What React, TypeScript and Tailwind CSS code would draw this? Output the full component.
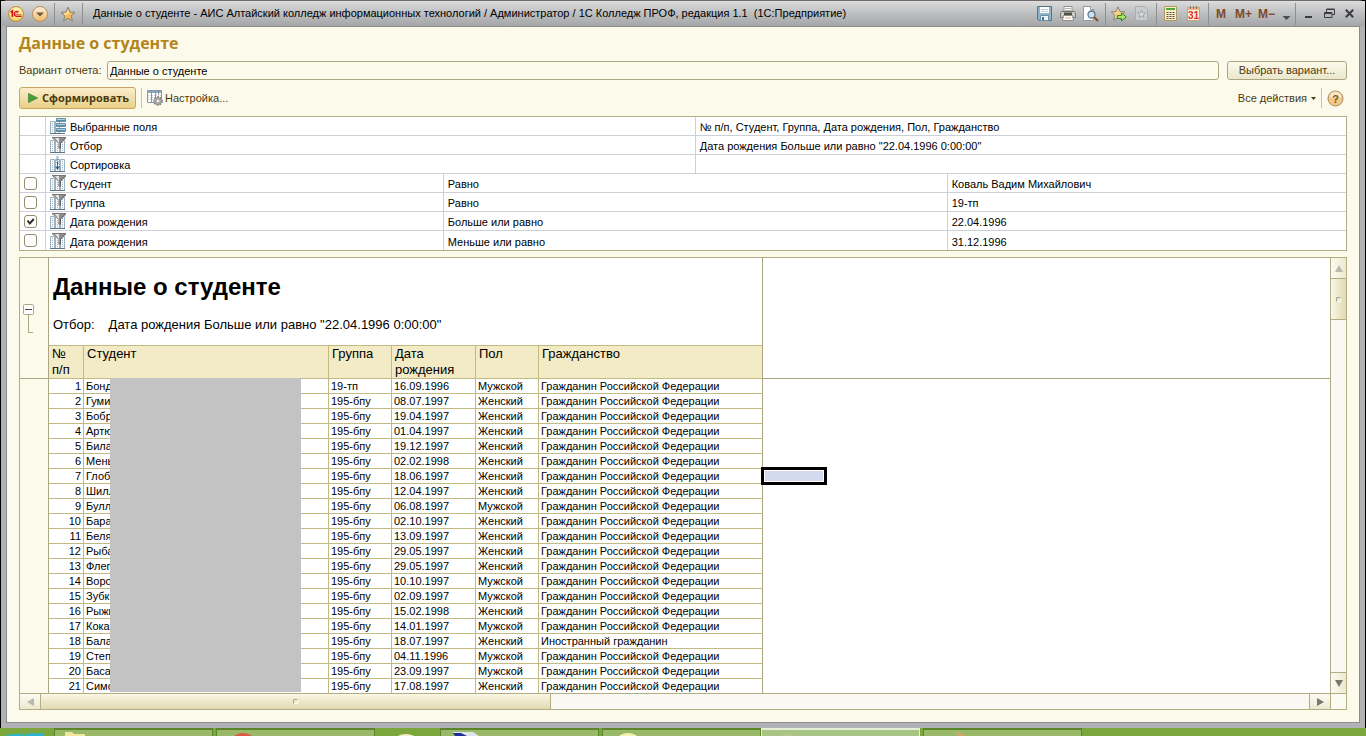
import { useState } from 'react'
import type { ReactNode } from 'react'
import clsx from 'clsx'

type Student = [name: string, group: string, birth: string, sex: string, citizenship: string]

const RF = 'Гражданин Российской Федерации'

const students: Student[] = [
    ['Бонд', '19-тп', '16.09.1996', 'Мужской', RF],
    ['Гуми', '195-бпу', '08.07.1997', 'Женский', RF],
    ['Бобр', '195-бпу', '19.04.1997', 'Женский', RF],
    ['Артю', '195-бпу', '01.04.1997', 'Женский', RF],
    ['Била', '195-бпу', '19.12.1997', 'Женский', RF],
    ['Мень', '195-бпу', '02.02.1998', 'Женский', RF],
    ['Глоб', '195-бпу', '18.06.1997', 'Женский', RF],
    ['Шилл', '195-бпу', '12.04.1997', 'Женский', RF],
    ['Булл', '195-бпу', '06.08.1997', 'Мужской', RF],
    ['Бара', '195-бпу', '02.10.1997', 'Женский', RF],
    ['Беля', '195-бпу', '13.09.1997', 'Женский', RF],
    ['Рыба', '195-бпу', '29.05.1997', 'Женский', RF],
    ['Флег', '195-бпу', '29.05.1997', 'Женский', RF],
    ['Воро', '195-бпу', '10.10.1997', 'Мужской', RF],
    ['Зубк', '195-бпу', '02.09.1997', 'Мужской', RF],
    ['Рыжк', '195-бпу', '15.02.1998', 'Женский', RF],
    ['Кока', '195-бпу', '14.01.1997', 'Мужской', RF],
    ['Бала', '195-бпу', '18.07.1997', 'Женский', 'Иностранный гражданин'],
    ['Степ', '195-бпу', '04.11.1996', 'Мужской', RF],
    ['Баса', '195-бпу', '23.09.1997', 'Мужской', RF],
    ['Симо', '195-бпу', '17.08.1997', 'Женский', RF],
]

const initialFilters = [
    { field: 'Студент', op: 'Равно', value: 'Коваль Вадим Михайлович', on: false },
    { field: 'Группа', op: 'Равно', value: '19-тп', on: false },
    { field: 'Дата рождения', op: 'Больше или равно', value: '22.04.1996', on: true },
    { field: 'Дата рождения', op: 'Меньше или равно', value: '31.12.1996', on: false },
]

/* ---------- icons ---------- */

function LogoIcon() {
    return (
        <svg width="16" height="16" viewBox="0 0 16 16">
            <defs>
                <radialGradient id="logo" cx="50%" cy="35%" r="65%">
                    <stop offset="0" stopColor="#fffbd0" />
                    <stop offset="0.7" stopColor="#fbe27a" />
                    <stop offset="1" stopColor="#e9b94a" />
                </radialGradient>
            </defs>
            <circle cx="8" cy="8" r="7.5" fill="url(#logo)" stroke="#b98d4a" />
            <path d="M2.6 6.3 4.4 5v6" fill="none" stroke="#d4141a" strokeWidth="1.7" />
            <path d="M10.6 6.2A2.5 2.5 0 1 0 8.6 10.4H13.6" fill="none" stroke="#d4141a" strokeWidth="1.3" />
            <path d="M9.6 7.3A1 1 0 1 0 8.7 8.8H13.6" fill="none" stroke="#d4141a" strokeWidth="0.8" />
        </svg>
    )
}

function MenuIcon() {
    return (
        <svg width="16" height="16" viewBox="0 0 16 16">
            <defs>
                <linearGradient id="menu" x1="0" y1="0" x2="0" y2="1">
                    <stop offset="0" stopColor="#fdf1dc" />
                    <stop offset="1" stopColor="#efb96c" />
                </linearGradient>
            </defs>
            <circle cx="8" cy="8" r="7.5" fill="url(#menu)" stroke="#b98d5a" />
            <path d="M4 6.5h8L8 10.5z" fill="#6b5a3e" />
        </svg>
    )
}

function StarIcon() {
    return (
        <svg width="16" height="16" viewBox="0 0 16 16">
            <path d="M8 1.2 10 6l5 .4-3.8 3.3L12.4 15 8 12.1 3.6 15l1.2-5.3L1 6.4 6 6z" fill="#f6bd5a" stroke="#85857c" strokeLinejoin="round" />
            <path d="M8 3.5 9.2 7 5 9.5 4 7.3 6.8 7z" fill="#fde7b4" />
        </svg>
    )
}

function SaveIcon() {
    return (
        <svg width="15" height="15" viewBox="0 0 15 15">
            <path d="M.5.5h14v14H2L.5 13z" fill="#8fb4ca" stroke="#4d7690" />
            <path d="M3 1h9v6H3z" fill="#fff" />
            <path d="M4 3.5h7M4 5.5h7" stroke="#b9cbd6" />
            <path d="M3.5 9.5h8v5h-8z" fill="#eef3f6" stroke="#6d90a6" />
            <path d="M5 11h2v3H5z" fill="#456f8c" />
        </svg>
    )
}

function PrintIcon() {
    return (
        <svg width="16" height="15" viewBox="0 0 16 15">
            <path d="M4 .5h8V6H4z" fill="#fff" stroke="#8d8d8d" />
            <path d="M5 2.5h6M5 4.5h6" stroke="#b5b5b5" />
            <path d="M1.5 5.5h13l1 2v4H.5v-4z" fill="#d2cdc2" stroke="#77746d" />
            <path d="M4 6.5h8v3H4z" fill="#55504a" />
            <path d="M3.5 9.5h9l1 5h-11z" fill="#fff" stroke="#8d8d8d" />
            <path d="M5 12h6" stroke="#e0a070" />
        </svg>
    )
}

function PreviewIcon() {
    return (
        <svg width="16" height="16" viewBox="0 0 16 16">
            <path d="M.5.5h7l3 3v11H.5z" fill="#fff" stroke="#8b9daa" />
            <path d="M7.5.5v3h3" fill="#e6edf2" stroke="#8b9daa" />
            <circle cx="8.5" cy="8.5" r="3.5" fill="#cfe1ec" stroke="#557488" strokeWidth="1.3" />
            <path d="m11 11 4 4" stroke="#8a4a2c" strokeWidth="2.2" />
        </svg>
    )
}

function StarAddIcon() {
    return (
        <svg width="16" height="16" viewBox="0 0 16 16">
            <path d="M7 .8 9 5.5l4.8.4L10.2 9.2l1.1 5L7 11.5 2.7 14.2l1.1-5L.3 5.9 5 5.5z" fill="#f8cf80" stroke="#85857c" strokeLinejoin="round" />
            <path d="M6.5 9.5h4V7l4.8 4-4.8 4v-2.500h-4z" fill="#a9e66c" stroke="#2f8a1e" />
        </svg>
    )
}

function PageStarIcon() {
    return (
        <svg width="13" height="15" viewBox="0 0 13 15">
            <path d="M.5.5h9l3 3v11H.5z" fill="#c9cdd0" stroke="#a9aeb2" />
            <path d="m6.5 4 1.2 2.6 2.8.3-2.1 1.9.6 2.7-2.500-1.4L4 11.5l.6-2.7-2.1-1.9 2.8-.3z" fill="#d5d8da" stroke="#969c9f" strokeWidth=".8" />
        </svg>
    )
}

function CalcIcon() {
    return (
        <svg width="13" height="15" viewBox="0 0 13 15">
            <path d="M.5.5h12v14H.5z" fill="#fbeecb" stroke="#b09a62" />
            <path d="M2 2h9v2H2z" fill="#4ea83e" />
            <path d="M2.5 6.5h8M2.5 8.5h8M2.5 10.5h8M2.5 12.5h8" stroke="#5d4c38" strokeDasharray="2 1" />
        </svg>
    )
}

function CalendarIcon() {
    return (
        <svg width="13" height="15" viewBox="0 0 13 15">
            <path d="M.5 1.5h12v13H.5z" fill="#fbf1dc" stroke="#c4a47c" />
            <path d="M1 2h11v2H1z" fill="#edb789" />
            <path d="M3.5 0v3M6.5 0v3M9.5 0v3" stroke="#8c7a68" />
            <text x="6.5" y="13" textAnchor="middle" fontSize="10" fontFamily="Liberation Sans, sans-serif" fill="#e0301c">31</text>
        </svg>
    )
}

function HelpIcon() {
    return (
        <svg width="17" height="17" viewBox="0 0 17 17">
            <circle cx="8.5" cy="8.5" r="7.5" fill="#f3c888" stroke="#a8895c" />
            <path d="M2.5 7.5a6 6 0 0 1 12 0z" fill="#fbe6c4" />
            <text x="8.5" y="12.5" textAnchor="middle" fontSize="11" fontWeight="bold" fontFamily="Liberation Sans, sans-serif" fill="#7a5526">?</text>
        </svg>
    )
}

function SettingsIcon() {
    return (
        <svg width="16" height="16" viewBox="0 0 16 16">
            <path d="M.5.5h14v12H.5z" fill="#fff" stroke="#8796a4" />
            <path d="M1 1h13v2H1z" fill="#8fa9bd" />
            <path d="M4.5 1v11M8.5 1v11M11.5 1v11" stroke="#8796a4" />
            <path d="M1 5.5h13M1 7.5h13M1 9.5h13" stroke="#c9d2da" strokeDasharray="1 1" />
            <circle cx="11" cy="11" r="4" fill="#a9a9a9" stroke="#858585" strokeWidth="1.6" strokeDasharray="1.7 1.2" />
            <circle cx="11" cy="11" r="1.3" fill="#f4f4f4" />
        </svg>
    )
}

// narrow table columns shared by the settings row icons
function Columns() {
    return (
        <>
            <path d="M.5 3.5h4v12h-4zM5.500 3.5h4v12h-4zM10.5 3.5h4v12h-4z" fill="#f6f9fb" stroke="#9fb1bf" />
            <path d="M2.5 5v10M7.5 5v10M12.5 5v10" stroke="#a9bac7" strokeDasharray="1 1" />
            <path d="M0 15.5h15" stroke="#5c7488" />
        </>
    )
}

function FieldsIcon() {
    return (
        <svg width="16" height="16" viewBox="0 0 16 16">
            <path d="M.5 3.5h4v12h-4zM5.5 3.5h4v12h-4z" fill="#f6f9fb" stroke="#9fb1bf" />
            <path d="M2.5 5v10" stroke="#a9bac7" strokeDasharray="1 1" />
            <path d="M0 15.5h15" stroke="#5c7488" />
            {[0, 5, 10].map((y) => (
                <g key={y}>
                    <rect x="6" y={y} width="10" height="4" rx="1" fill="#5f8ea6" />
                    <path d={`M7 ${y + 1.5}h8`} stroke="#b4d3e1" />
                </g>
            ))}
        </svg>
    )
}

function FilterIcon() {
    return (
        <svg width="16" height="16" viewBox="0 0 16 16">
            <Columns />
            <path d="M2 0h14v1l-5 5v5l-1 1-2-1V6L2 1z" fill="#8f8f8f" />
            <path d="M5 1h4v9H8.500V5.500z" fill="#e4e4e4" />
            <path d="M15.500 1 10.500 6v5.500" fill="none" stroke="#5f5f5f" />
            <path d="M2 .5h14" stroke="#777" />
        </svg>
    )
}

function SortIcon() {
    return (
        <svg width="16" height="16" viewBox="0 0 16 16">
            <Columns />
            <path d="M7 0v8M8 1v8" stroke="#4c7da3" strokeDasharray="1 1" />
            <path d="M7.5 6v7" stroke="#2c6790" />
            <path d="M5 10.5h5l-2.500 3.500z" fill="#2c6790" />
        </svg>
    )
}

/* ---------- title bar ---------- */

function BarButton({ label, children, className }: { label: string; children: ReactNode; className?: string }) {
    return (
        <button aria-label={label} title={label} className={clsx('flex h-4 shrink-0 items-center justify-center', className)}>
            {children}
        </button>
    )
}

function BarLine() {
    return <span className="h-[22px] w-px shrink-0 bg-[#8d8e90]" />
}

function TitleBar() {
    return (
        <header className="flex h-[25px] shrink-0 items-center bg-linear-to-b from-[#dcdcdd] via-[#bdbebf] to-[#a5a6a9] pr-[11px] pl-[7px]">
            <div className="flex items-center">
                <BarButton label="Главное меню"><LogoIcon /></BarButton>
                <BarButton label="Меню" className="ml-2"><MenuIcon /></BarButton>
                <span className="w-[6px]" />
                <BarLine />
                <BarButton label="Избранное" className="ml-[5px]"><StarIcon /></BarButton>
                <span className="w-[6px]" />
                <BarLine />
            </div>
            <h1 className="ml-[10px] min-w-0 flex-1 truncate text-[11px] text-black">
                Данные о студенте - АИС Алтайский колледж информационных технологий / Администратор / 1С Колледж ПРОФ, редакция 1.1&nbsp; (1С:Предприятие)
            </h1>
            <div className="flex items-center text-xs font-bold text-[#7d4a2b]">
                <BarButton label="Сохранить"><SaveIcon /></BarButton>
                <BarButton label="Печать" className="ml-2"><PrintIcon /></BarButton>
                <BarButton label="Просмотр" className="ml-[7px]"><PreviewIcon /></BarButton>
                <span className="w-[6px]" />
                <BarLine />
                <BarButton label="Добавить в избранное" className="ml-[5px]"><StarAddIcon /></BarButton>
                <BarButton label="Ссылка" className="ml-2"><PageStarIcon /></BarButton>
                <span className="w-[8px]" />
                <BarLine />
                <BarButton label="Калькулятор" className="ml-[7px]"><CalcIcon /></BarButton>
                <BarButton label="Календарь" className="ml-[10px]"><CalendarIcon /></BarButton>
                <span className="w-[8px]" />
                <BarLine />
                <button className="ml-[7px]">M</button>
                <button className="ml-[9px]">M+</button>
                <button className="ml-[6px]">M−</button>
                <BarButton label="Ещё" className="ml-[7px]">
                    <svg width="9" height="16" viewBox="0 0 9 16"><path d="M.5 10h8L4.5 14z" fill="#4b4b4d" /></svg>
                </BarButton>
                <span className="w-1" />
                <BarLine />
                <BarButton label="Свернуть" className="ml-[9px]">
                    <svg width="7" height="16" viewBox="0 0 7 16"><path d="M0 11h7" stroke="#3c3c3e" strokeWidth="2" /></svg>
                </BarButton>
                <BarButton label="Восстановить" className="ml-3">
                    <svg width="11" height="11" viewBox="0 0 11 11" fill="none" stroke="#3c3c3e">
                        <path d="M2.5 4V1.5h8v5H8M2.5 1h8" />
                        <path d="M.5 4.5h7.5v5H.5zM.5 5.5h7" />
                    </svg>
                </BarButton>
                <BarButton label="Закрыть" className="ml-[10px]">
                    <svg width="9" height="9" viewBox="0 0 9 9"><path d="m.8.8 7.4 7.4M8.2.8.8 8.2" stroke="#3c3c3e" strokeWidth="2" /></svg>
                </BarButton>
            </div>
        </header>
    )
}

/* ---------- settings ---------- */

const cell = 'h-[19px] border-b border-[#cdd0d6] py-0 pr-0 group-last:border-b-0'
const textCell = 'pl-1 leading-4 align-bottom'

function NameCell({ icon, text, span }: { icon: ReactNode; text: string; span?: number }) {
    return (
        <td colSpan={span} className={clsx(cell, 'border-r pl-1')}>
            <div className="flex h-[18px] items-end gap-1">
                <span className="self-center">{icon}</span>
                <span className="leading-4">{text}</span>
            </div>
        </td>
    )
}

function SettingsTable() {
    const [filters, setFilters] = useState(initialFilters)

    function toggle(index: number) {
        setFilters(filters.map((f, i) => (i === index ? { ...f, on: !f.on } : f)))
    }

    return (
        <div className="mt-[7px] border border-[#b3ad84] bg-white">
            <table className="w-full table-fixed border-separate border-spacing-0 text-[11px] text-black [&_svg]:block">
                <colgroup>
                    <col className="w-[26px]" />
                    <col className="w-[30%]" />
                    <col className="w-[19%]" />
                    <col className="w-[19%]" />
                    <col />
                </colgroup>
                <tbody>
                    <tr className="group">
                        <td className={clsx(cell, 'border-r')} />
                        <NameCell span={2} icon={<FieldsIcon />} text="Выбранные поля" />
                        <td colSpan={2} className={clsx(cell, textCell)}>№ п/п, Студент, Группа, Дата рождения, Пол, Гражданство</td>
                    </tr>
                    <tr className="group">
                        <td className={clsx(cell, 'border-r')} />
                        <NameCell span={2} icon={<FilterIcon />} text="Отбор" />
                        <td colSpan={2} className={clsx(cell, textCell)}>Дата рождения Больше или равно "22.04.1996 0:00:00"</td>
                    </tr>
                    <tr className="group">
                        <td className={clsx(cell, 'border-r')} />
                        <NameCell span={2} icon={<SortIcon />} text="Сортировка" />
                        <td colSpan={2} className={cell} />
                    </tr>
                    {filters.map((f, i) => (
                        <tr key={i} className="group">
                            <td className={clsx(cell, 'border-r pl-1')}>
                                <label className="relative block size-[13px]">
                                    <input
                                        type="checkbox"
                                        aria-label={f.field}
                                        checked={f.on}
                                        onChange={() => toggle(i)}
                                        className="peer block size-[13px] appearance-none rounded-[3px] border border-[#938d6b] bg-white"
                                    />
                                    <span className="pointer-events-none absolute inset-0 hidden peer-checked:block">
                                        <svg viewBox="0 0 13 13">
                                            <path d="m3.5 5.5 2.3 3L9.8 4" fill="none" stroke="#2e2e2e" strokeWidth="2" />
                                        </svg>
                                    </span>
                                </label>
                            </td>
                            <NameCell icon={<FilterIcon />} text={f.field} />
                            <td colSpan={2} className={clsx(cell, textCell, 'border-r')}>{f.op}</td>
                            <td className={clsx(cell, textCell)}>{f.value}</td>
                        </tr>
                    ))}
                </tbody>
            </table>
        </div>
    )
}

/* ---------- report ---------- */

const th = 'h-[34px] border-y border-r border-[#c3ba83] px-[3px] py-0 text-left align-top font-normal leading-4'
const td = 'h-[15px] border-r border-b border-[#c3ba83] px-[2px] py-0 leading-[14px] whitespace-nowrap'

function Report() {
    return (
        <div className="w-[714px] shrink-0 overflow-hidden border-r border-[#aba783]">
            <div className="h-[87px] px-1">
                <h3 className="pt-[15px] text-2xl leading-7 font-bold">Данные о студенте</h3>
                <p className="flex gap-[14px] pt-4 text-[13px] leading-4">
                    <span>Отбор:</span>
                    <span>Дата рождения Больше или равно "22.04.1996 0:00:00"</span>
                </p>
            </div>
            <div className="relative">
                <table className="w-[714px] table-fixed border-separate border-spacing-0 text-[11px]">
                    <colgroup>
                        <col className="w-[35px]" />
                        <col className="w-[245px]" />
                        <col className="w-[63px]" />
                        <col className="w-[84px]" />
                        <col className="w-[63px]" />
                        <col />
                    </colgroup>
                    <thead className="bg-[#f2ebc5] text-[13px]">
                        <tr>
                            <th className={th}>№ п/п</th>
                            <th className={th}>Студент</th>
                            <th className={th}>Группа</th>
                            <th className={th}>Дата рождения</th>
                            <th className={th}>Пол</th>
                            <th className={clsx(th, 'border-r-0')}>Гражданство</th>
                        </tr>
                    </thead>
                    <tbody>
                        {students.map(([name, group, birth, sex, citizenship], i) => (
                            <tr key={i}>
                                <td className={clsx(td, 'text-right')}>{i + 1}</td>
                                <td className={td}>{name}</td>
                                <td className={td}>{group}</td>
                                <td className={td}>{birth}</td>
                                <td className={td}>{sex}</td>
                                <td className={clsx(td, 'border-r-0')}>{citizenship}</td>
                            </tr>
                        ))}
                    </tbody>
                </table>
                {/* hides the personal data */}
                <div className="absolute top-[33px] left-[61px] h-[314px] w-[191px] bg-[#c3c3c3]" />
            </div>
        </div>
    )
}

function Grip() {
    return (
        <svg width="5" height="5" viewBox="0 0 5 5">
            <path d="M.5 4.5v-4h4" fill="none" stroke="#aaa68a" />
            <path d="M4.5 1.5v3h-3" fill="none" stroke="#fff" />
        </svg>
    )
}

function Spreadsheet() {
    return (
        <section className="mt-[6px] flex min-h-0 flex-1 flex-col border border-[#b3ad84] bg-white text-black">
            <div className="flex min-h-0 flex-1">
                <div className="w-[29px] shrink-0 border-r border-[#aba783] bg-[#fcfaeb]">
                    <div className="h-[121px] border-b border-[#aba783] pt-[46px] pl-[3px]">
                        <button aria-label="Свернуть группу" className="block">
                            <svg width="11" height="29" viewBox="0 0 11 29" fill="none">
                                <rect x=".5" y=".5" width="10" height="10" rx="1" fill="#fff" stroke="#aba783" />
                                <path d="M2 5.5h7" stroke="#4a4632" />
                                <path d="M5.5 11v17.5H10" stroke="#aba783" />
                            </svg>
                        </button>
                    </div>
                </div>
                <Report />
                <div className="relative min-w-0 flex-1">
                    <div className="h-[121px] border-b border-[#aba783]" />
                    <div className="absolute top-[209px] -left-[2px] h-[18px] w-[66px] border-3 border-black bg-white p-px">
                        <div className="h-full bg-[#d3d9ee]" />
                    </div>
                </div>
                <div className="flex w-4 shrink-0 flex-col border-l border-[#b3ad84] bg-[#f9f8f3]">
                    <button aria-label="Вверх" className="flex h-[21px] items-center justify-center border-b border-[#b3ad84] bg-linear-to-r from-[#fcfbf2] to-[#ece8cf]">
                        <svg width="8" height="7" viewBox="0 0 8 7"><path d="M0 7h8L4 0z" fill="#b9b8aa" /></svg>
                    </button>
                    <div className="flex h-[41px] items-center justify-center border-b border-[#b3ad84] bg-linear-to-r from-[#faf7e4] to-[#e0dab3]">
                        <Grip />
                    </div>
                    <div className="flex-1" />
                    <button aria-label="Вниз" className="flex h-[21px] items-center justify-center border-t border-[#b3ad84] bg-linear-to-r from-[#fcfbf2] to-[#ece8cf]">
                        <svg width="8" height="7" viewBox="0 0 8 7"><path d="M0 0h8L4 7z" fill="#77776f" /></svg>
                    </button>
                </div>
            </div>
            <div className="flex h-4 shrink-0 border-t border-[#b3ad84] bg-[#f9f8f3]">
                <button aria-label="Влево" className="flex w-[21px] items-center justify-center border-r border-[#b3ad84] bg-linear-to-b from-[#fcfbf2] to-[#ece8cf]">
                    <svg width="7" height="8" viewBox="0 0 7 8"><path d="M7 0v8L0 4z" fill="#b9b8aa" /></svg>
                </button>
                <div className="flex w-[510px] items-center justify-center border-r border-[#b3ad84] bg-linear-to-b from-[#faf7e4] to-[#e0dab3]">
                    <Grip />
                </div>
                <div className="flex-1" />
                <button aria-label="Вправо" className="flex w-[21px] items-center justify-center border-l border-[#b3ad84] bg-linear-to-b from-[#fcfbf2] to-[#ece8cf]">
                    <svg width="7" height="8" viewBox="0 0 7 8"><path d="M0 0v8l7-4z" fill="#77776f" /></svg>
                </button>
                <div className="w-4 border-l border-[#b3ad84] bg-[#fcfbf2]" />
            </div>
        </section>
    )
}

/* ---------- taskbar ---------- */

function Task({ label, active, children }: { label: string; active?: boolean; children?: ReactNode }) {
    return (
        <button
            aria-label={label}
            className={clsx(
                'flex w-[159px] items-start overflow-hidden border-x border-t-2 pl-2',
                active ? 'border-[#e6efd8] bg-[#a9c583]' : 'border-[#5c8428] bg-[#99b969]',
            )}
        >
            {children}
        </button>
    )
}

function Taskbar() {
    return (
        <nav className="flex h-2 shrink-0 overflow-hidden bg-[#7aa63b]">
            <button aria-label="Пуск" className="w-[54px]">
                <svg width="54" height="8" viewBox="0 0 54 8"><path d="M8 6.500 24 5.500V8H8zM26 5.500 43 5v3H26z" fill="#2bb4c9" /></svg>
            </button>
            <Task label="Проводник">
                <svg width="24" height="6" viewBox="0 0 24 6"><path d="M2 2h7l2 2h11v2H2z" fill="#f2e79a" /></svg>
            </Task>
            <span className="w-[3px]" />
            <Task label="Браузер">
                <svg width="32" height="6" viewBox="0 0 32 6"><ellipse cx="18" cy="9" rx="10" ry="6" fill="#dc5c41" /></svg>
            </Task>
            <button aria-label="Приложение" className="w-[65px]">
                <svg width="65" height="8" viewBox="0 0 65 8"><ellipse cx="31" cy="12" rx="11" ry="6" fill="#f4efc0" /></svg>
            </button>
            <Task label="Редактор">
                <svg width="36" height="6" viewBox="0 0 36 6"><path d="M4 2h20l6 4H6z" fill="#dfe3ee" /><path d="M4 3h8l6 3H6z" fill="#1d2f92" /></svg>
            </Task>
            <span className="w-[3px]" />
            <Task label="1С Предприятие">
                <svg width="32" height="6" viewBox="0 0 32 6"><ellipse cx="17" cy="9" rx="10" ry="6" fill="#f6efb4" /></svg>
            </Task>
            <Task label="1С Колледж" active>
                <svg width="32" height="6" viewBox="0 0 32 6"><ellipse cx="17" cy="9" rx="9" ry="5" fill="#b9c78a" /></svg>
            </Task>
            <span className="w-[3px]" />
            <Task label="Рисунок">
                <svg width="36" height="6" viewBox="0 0 36 6"><path d="m24 3 3-1 6 4h-6z" fill="#dba163" /></svg>
            </Task>
        </nav>
    )
}

export default function App() {
    const [variant, setVariant] = useState('Данные о студенте')

    return (
        <div className="flex h-screen flex-col overflow-hidden bg-black font-['Liberation_Sans',Arial,sans-serif]">
            <div className="mx-px flex min-h-0 flex-1 flex-col rounded-t-md border-t border-[#6d6b6c] bg-[#b1b2b5] pb-[5px]">
                <TitleBar />
                <main className="mx-[5px] flex min-h-0 flex-1 flex-col border border-[#8c8d8f] bg-[#fcfaeb] px-3 pb-3 text-[#4a3a12]">
                    <h2 className="pt-1 font-['Open_Sans','Noto_Sans',sans-serif] text-base leading-6 font-bold text-[#b28419]">Данные о студенте</h2>
                    <div className="mt-[6px] flex items-center text-[11px]">
                        <label htmlFor="variant" className="w-[88px] shrink-0">Вариант отчета:</label>
                        <input
                            id="variant"
                            value={variant}
                            onChange={(e) => setVariant(e.target.value)}
                            className="h-[19px] min-w-0 flex-1 rounded-[3px] border border-[#aba783] bg-[#fcfaeb] px-[2px] text-black"
                        />
                        <button className="ml-2 h-[19px] w-[120px] rounded-[3px] border border-[#aba783] bg-linear-to-b from-[#fcfaec] to-[#ebe7cd]">
                            Выбрать вариант...
                        </button>
                    </div>
                    <div className="mt-[7px] flex h-[22px] items-center text-[11px]">
                        <button className="flex h-[22px] w-[117px] shrink-0 items-center gap-1 rounded-[3px] border border-[#c9a660] bg-linear-to-b from-[#fbeecb] to-[#e9d087] pl-2 font-['Open_Sans','Noto_Sans',sans-serif] font-bold">
                            <svg width="10" height="10" viewBox="0 0 10 10" className="shrink-0"><path d="M.5.5v9l9-4.500z" fill="#3fa331" stroke="#5f8d4c" /></svg>
                            Сформировать
                        </button>
                        <span className="mx-[5px] h-5 w-px bg-[#c9c4a5]" />
                        <button className="flex items-center gap-[2px]">
                            <SettingsIcon />
                            Настройка...
                        </button>
                        <button className="ml-auto flex items-center gap-1">
                            Все действия
                            <svg width="5" height="3" viewBox="0 0 5 3"><path d="M0 0h5L2.5 3z" fill="#4a3a12" /></svg>
                        </button>
                        <span className="mx-[5px] h-5 w-px bg-[#c9c4a5]" />
                        <button aria-label="Справка" className="mr-[3px]"><HelpIcon /></button>
                    </div>
                    <SettingsTable />
                    <Spreadsheet />
                </main>
            </div>
            <Taskbar />
        </div>
    )
}
